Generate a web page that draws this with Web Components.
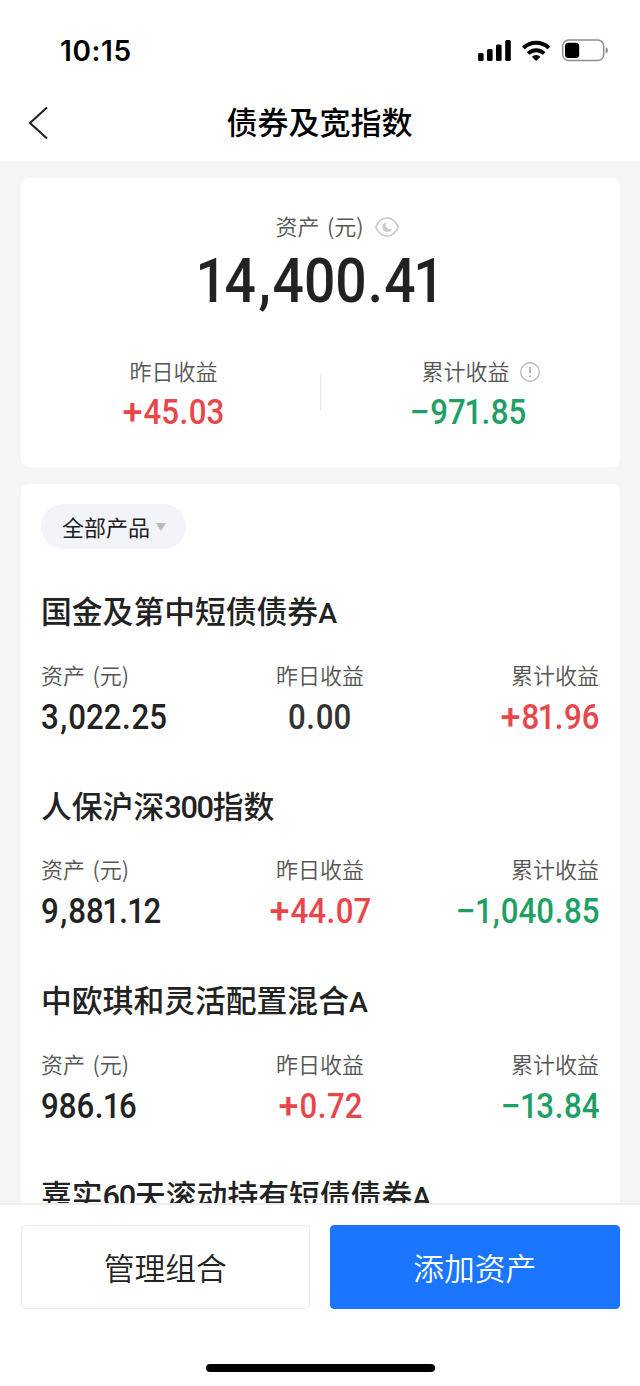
<!DOCTYPE html>
<html lang="zh-CN">
<head>
<meta charset="utf-8">
<meta name="viewport" content="width=device-width">
<title>债券及宽指数</title>
<style>
html,body{margin:0;height:100%;overflow:hidden}
body{background:#f5f5f5;color:#222;font-family:"Noto Sans CJK SC",sans-serif}
</style>
</head>
<body>
<portfolio-page></portfolio-page>
<script>
const define=(name,css,html)=>customElements.define(name,class extends HTMLElement{
  constructor(){
    super();
    const t=document.createElement('template');
    t.innerHTML=`<style>*{box-sizing:border-box}:host{box-sizing:border-box}${css}</style>${html}`;
    this.attachShadow({mode:'open'}).append(t.content.cloneNode(true));
  }
});

/* An amount in condensed figures: narrow ones, roomy separators, wide signs. */
const figureClass={'1':'one',',':'comma','.':'dot','+':'plus','−':'minus'};
customElements.define('money-value',class extends HTMLElement{
  constructor(){
    super();
    this.attachShadow({mode:'open'});
  }
  connectedCallback(){
    const text=this.getAttribute('value').replace(/[1,.+−]/g,c=>`<i class="${figureClass[c]}">${c}</i>`);
    this.shadowRoot.innerHTML=`<style>
:host{display:block;font:500 34.5px/40px Roboto,sans-serif;color:#222;white-space:nowrap}
:host([tone=up]){color:#e8464b}
:host([tone=down]){color:#1ea065}
:host([tone=flat]){color:#333}
:host([size=large]){font-size:61px;line-height:66px}
span{display:inline-block;transform:scaleX(.905);transform-origin:0 50%}
i{font-style:normal}
.one{margin:0 -.045em 0 -.045em}
.comma{margin:0 .03em 0 .05em}
.dot{margin:0 .02em 0 .02em}
.plus,.minus{display:inline-block;transform:scaleX(1.15)}
.plus{margin:0 .08em 0 .05em}
.minus{margin:0 .06em 0 .03em}
</style><span>${text}</span>`;
    this.style.width=this.shadowRoot.querySelector('span').getBoundingClientRect().width+'px';
  }
});

define('status-bar',`
:host{display:flex;height:86px;padding:36px 32px 0 60px;justify-content:space-between;align-items:flex-start}
.time{font:600 28px/30px Inter,sans-serif;color:#000;letter-spacing:.6px}
svg{display:block;width:132px;height:30px}`,
`<span class="time">10:15</span>
<svg viewBox="476 36 132 30">
<rect x="478" y="53" width="5.6" height="8" rx="1.6"/><rect x="487" y="49" width="5.6" height="12" rx="1.6"/><rect x="496" y="44.5" width="5.6" height="16.500" rx="1.6"/><rect x="505.200" y="40" width="5.600" height="21" rx="1.6"/>
<g fill="none" stroke="#000" stroke-width="4"><path d="M523.400 48a18.400 18.400 0 0 1 25.500 0"/><path d="M528.200 53.500a11.300 11.300 0 0 1 15.900 0" stroke-width="3.800"/></g>
<path d="M536.100 60.900l-4.300-4.200a6.100 6.100 0 0 1 8.600 0z"/>
<rect x="562.700" y="40" width="41" height="20.600" rx="6" fill="none" stroke="#8e8e8e" stroke-width="1.500"/>
<rect x="565" y="42.700" width="14.200" height="15.200" rx="3.500"/>
<path d="M605.700 47.300c3 1.200 3 5 0 6.200z" fill="#8e8e8e"/>
</svg>`);

define('nav-bar',`
:host{display:grid;grid-template-columns:60px 1fr 60px;height:75px;align-items:center}
svg{display:block;width:22px;height:36px;margin:-2px 0 0 27px}
h1{margin:-5px 0 0 -1px;text-align:center;font-size:31px;line-height:44px;font-weight:500;color:#000}`,
`<svg viewBox="0 0 22 36" fill="none" stroke="#222" stroke-width="2.100"><path d="M20 2.500L3 18 20 33.500"/></svg><h1><slot></slot></h1>`);

define('panel-card',`:host{display:block;background:#fff;border-radius:8px}`,`<slot></slot>`);

define('field-label',`:host{display:block;font-size:22px;line-height:30px;font-weight:350;color:#555;word-spacing:2.500px;white-space:nowrap}`,`<slot></slot>`);

define('eye-icon',`:host{display:block}svg{display:block;width:26px;height:22px}`,
`<svg viewBox="0 0 26 22"><path d="M1.800 11C3 7 7.800 1.800 13 1.800S23 7 24.200 11C23 15 18.200 20.200 13 20.200S3 15 1.800 11z" fill="none" stroke="#ccc" stroke-width="1.800"/><path d="M12.800 6.300a4.800 4.800 0 1 0 5 6.100 4 4 0 0 1-5-6.100z" fill="#ccc"/></svg>`);

define('info-icon',`:host{display:block}svg{display:block;width:22px;height:22px}`,
`<svg viewBox="0 0 22 22"><circle cx="11" cy="11" r="9.300" fill="none" stroke="#bbb" stroke-width="1.400"/><path d="M11 5.800v6.700M11 14.200v1.800" stroke="#aaa" stroke-width="1.600"/></svg>`);

define('asset-summary',`
:host{display:flex;flex-direction:column;height:289px;padding-top:32px}
.head{display:flex;align-items:center;gap:11px;padding-left:255px}
eye-icon,info-icon{margin-top:3px}
.total{display:flex;justify-content:center;margin-top:8px}
.split{display:grid;grid-template-columns:1fr 1px 1fr;margin-top:41px}
.cell{display:flex;flex-direction:column}
.left{align-items:center;padding-left:7px}
.right{padding-left:89px}
.row{display:flex;align-items:center;gap:9px;padding-left:12px}
.rule{height:35px;background:#e8e8e8;margin-top:20px}
.cell money-value{margin-top:7px}`,
`<div class="head"><field-label>资产 (元)</field-label><eye-icon></eye-icon></div>
<div class="total"><money-value size="large" value="14,400.41"></money-value></div>
<div class="split"><div class="cell left"><field-label>昨日收益</field-label><money-value tone="up" value="+45.03"></money-value></div>
<div class="rule"></div>
<div class="cell right"><div class="row"><field-label>累计收益</field-label><info-icon></info-icon></div><money-value tone="down" value="−971.85"></money-value></div></div>`);

define('filter-chip',`
:host{display:flex;align-items:center;gap:6px;width:145px;height:45px;padding:0 0 2px 21px;border-radius:23px;background:#f2f4f9;font-size:22px;line-height:30px;color:#1c1e24}
svg{display:block;width:10px;height:8px;margin-top:3px}`,
`<slot></slot><svg viewBox="0 0 10 8"><path d="M0 0h10L5 8z" fill="#bbb"/></svg>`);

define('fund-item',`
:host{display:block;height:194.700px}
h2{margin:0;font:500 30.800px/44px Roboto,"Noto Sans CJK SC",sans-serif;white-space:nowrap}
.cols{display:grid;grid-template-columns:1fr 1fr 1fr;margin-top:23px}
.cols>div{display:flex;flex-direction:column;gap:8px}
.mid{align-items:center}.end{align-items:flex-end}
:host([collapsed]) .cols{display:none}`,
`<h2><slot name="name"></slot></h2><div class="cols">
<div><field-label>资产 (元)</field-label><slot name="asset"></slot></div>
<div class="mid"><field-label>昨日收益</field-label><slot name="day"></slot></div>
<div class="end"><field-label>累计收益</field-label><slot name="all"></slot></div></div>`);

define('action-button',`
:host{display:flex;height:84px;align-items:center;justify-content:center;border:1.500px solid #eaeaea;border-radius:4px;font-size:30.800px;line-height:44px;font-weight:350;color:#222;background:#fff}
:host([primary]){background:#1a75ff;border-color:#1a75ff;color:#fff}`,`<slot></slot>`);

define('bottom-bar',`
:host{display:flex;flex-direction:column;align-items:center;height:183px;background:#fff;border-top:2px solid #eee;padding-top:20px}
.actions{display:grid;grid-template-columns:1fr 1fr;gap:20px;width:599px}
.home{width:229px;height:8px;border-radius:4px;background:#000;margin-top:55px}`,
`<div class="actions"><action-button>管理组合</action-button><action-button primary>添加资产</action-button></div><div class="home"></div>`);

define('portfolio-page',`
:host{display:flex;flex-direction:column;width:640px;height:1386px;background:#f5f5f5;overflow:hidden}
header{background:#fff;height:161px;flex:none}
main{flex:1;min-height:0;overflow:hidden;padding:17px 20.500px 0}
.list{margin-top:17px;padding:20px 20.500px;height:760px}
.funds{margin-top:42px}
.num{letter-spacing:-1.300px}
.suffix{font-size:28.500px}
bottom-bar{flex:none}`,
`<header><status-bar></status-bar><nav-bar>债券及宽指数</nav-bar></header>
<main><panel-card><asset-summary></asset-summary></panel-card>
<panel-card class="list"><filter-chip>全部产品</filter-chip><div class="funds">
<fund-item><span slot="name">国金及第中短债债券<span class="suffix">A</span></span><money-value slot="asset" value="3,022.25"></money-value><money-value slot="day" tone="flat" value="0.00"></money-value><money-value slot="all" tone="up" value="+81.96"></money-value></fund-item>
<fund-item><span slot="name">人保沪深<span class="num">300</span>指数</span><money-value slot="asset" value="9,881.12"></money-value><money-value slot="day" tone="up" value="+44.07"></money-value><money-value slot="all" tone="down" value="−1,040.85"></money-value></fund-item>
<fund-item><span slot="name">中欧琪和灵活配置混合<span class="suffix">A</span></span><money-value slot="asset" value="986.16"></money-value><money-value slot="day" tone="up" value="+0.72"></money-value><money-value slot="all" tone="down" value="−13.84"></money-value></fund-item>
<fund-item collapsed><span slot="name">嘉实<span class="num">60</span>天滚动持有短债债券<span class="suffix">A</span></span></fund-item>
</div></panel-card></main>
<bottom-bar></bottom-bar>`);
</script>
</body>
</html>
